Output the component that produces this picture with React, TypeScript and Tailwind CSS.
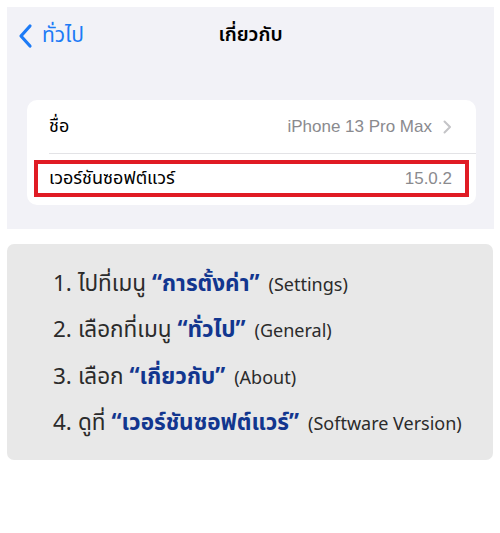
import React from "react";

const ff = { fontFamily: '"Noto Sans Thai", "Noto Sans", "Liberation Sans", sans-serif' };

function Step({ n, plain, bold, en }: { n: string; plain: string; bold: string; en: string }) {
  return (
    <div className="flex items-baseline h-[46.3px] text-[22.5px] text-[#2b2b2b] whitespace-nowrap">
      <span>{n}</span>
      <span className="ml-[6px]">{plain}</span>
      <span className="ml-[6px] font-bold text-[#12368f]">“{bold}”</span>
      <span className="ml-[9px] text-[18px]">({en})</span>
    </div>
  );
}

export default function App() {
  return (
    <div className="w-[500px] h-[533px] bg-white pt-[7px] px-[7px]" style={ff}>
      <div className="w-[487px] h-[222px] bg-[#f2f2f7] flex flex-col">
        <div className="h-[58px] flex items-center relative">
          <div className="flex items-center pl-[10px] text-[#1d7bf6] text-[21px]">
            <svg width="18" height="26" viewBox="0 0 18 26" className="mr-[7px]">
              <path d="M13 3 L4 13 L13 23" fill="none" stroke="#1d7bf6" strokeWidth="3.2" strokeLinecap="round" strokeLinejoin="round" />
            </svg>
            <span>ทั่วไป</span>
          </div>
          <div className="absolute left-0 right-0 top-0 h-[58px] flex items-center justify-center text-[19.5px] font-semibold text-black pointer-events-none">
            เกี่ยวกับ
          </div>
        </div>
        <div className="mt-[35px] ml-[20px] w-[449px] h-[105px] bg-white rounded-[10px] flex flex-col">
          <div className="h-[53px] flex items-center pl-[22px] pr-[24px] text-[18px]">
            <span className="text-black flex-1">ชื่อ</span>
            <span className="text-[#8a8a8e] text-[17px]" style={{ fontFamily: '"Liberation Sans", "Noto Sans", sans-serif' }}>iPhone 13 Pro Max</span>
            <svg width="9" height="14" viewBox="0 0 9 14" className="ml-[11px]">
              <path d="M1.5 1.5 L7 7 L1.5 12.5" fill="none" stroke="#c4c4c7" strokeWidth="2" strokeLinecap="round" strokeLinejoin="round" />
            </svg>
          </div>
          <div className="ml-[22px] h-px bg-[#e3e3e6]" />
          <div className="mt-[6px] ml-[7px] w-[435px] h-[37px] border-[4px] border-[#e01b24] flex items-center pl-[11px] pr-[13px] text-[18px]">
            <span className="text-black flex-1">เวอร์ชันซอฟต์แวร์</span>
            <span className="text-[#8a8a8e] text-[17px]" style={{ fontFamily: '"Liberation Sans", "Noto Sans", sans-serif' }}>15.0.2</span>
          </div>
        </div>
      </div>
      <div className="mt-[15px] w-[486px] h-[216px] bg-[#e8e8e8] rounded-[7px] pl-[46px] pt-[24px]">
        <Step n="1." plain="ไปที่เมนู" bold="การตั้งค่า" en="Settings" />
        <Step n="2." plain="เลือกที่เมนู" bold="ทั่วไป" en="General" />
        <Step n="3." plain="เลือก" bold="เกี่ยวกับ" en="About" />
        <Step n="4." plain="ดูที่" bold="เวอร์ชันซอฟต์แวร์" en="Software Version" />
      </div>
    </div>
  );
}
